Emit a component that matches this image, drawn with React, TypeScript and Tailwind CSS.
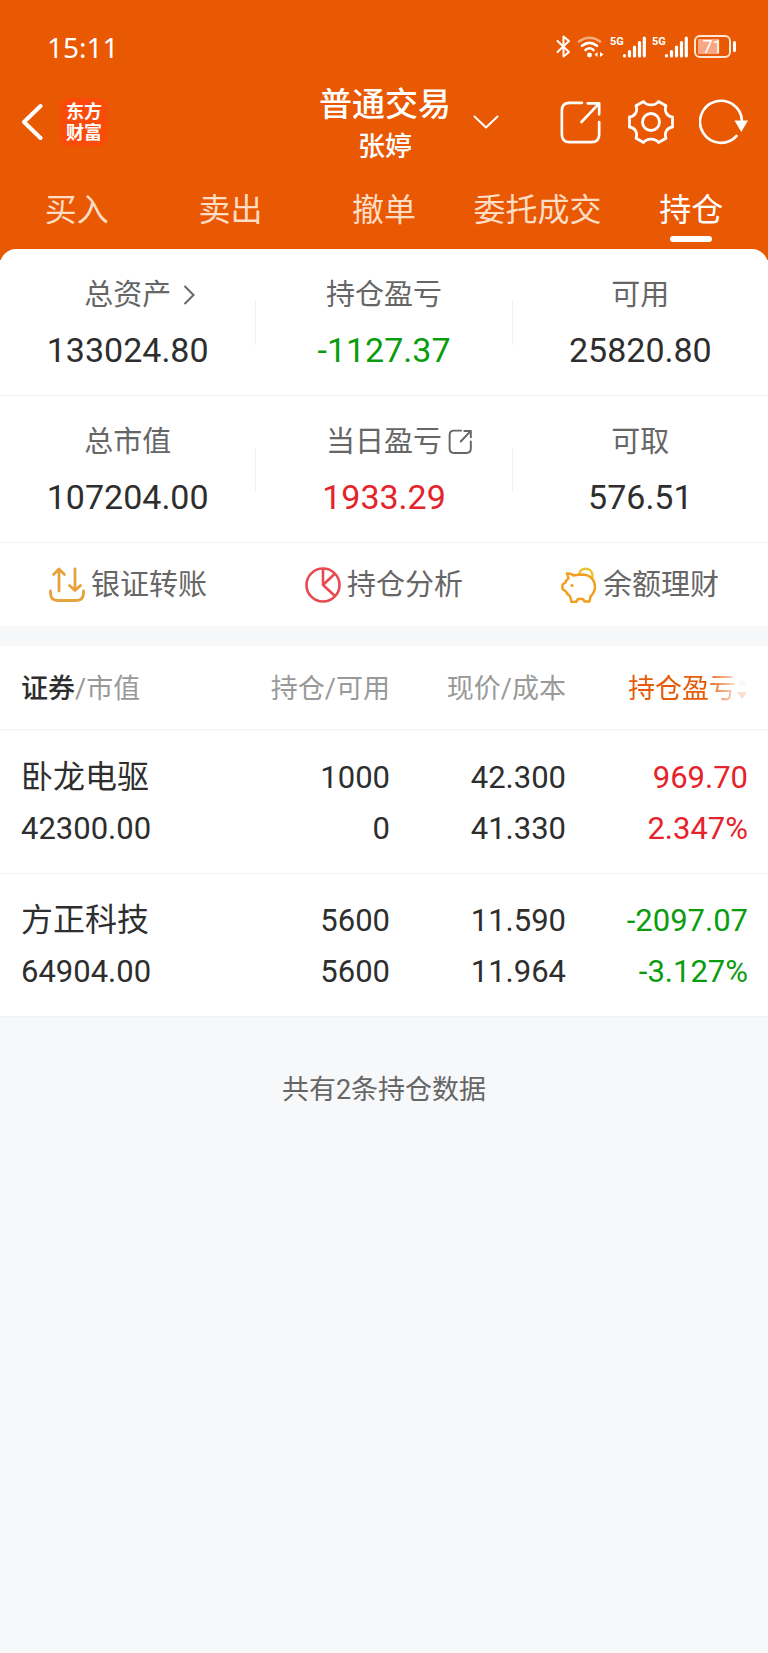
import type { ReactNode } from "react"
import clsx from "clsx"

const tabs = ["买入", "卖出", "撤单", "委托成交", "持仓"]

const holdings = [
  {
    name: "卧龙电驱",
    marketValue: "42300.00",
    shares: "1000",
    available: "0",
    price: "42.300",
    cost: "41.330",
    profit: "969.70",
    rate: "2.347%",
    up: true,
  },
  {
    name: "方正科技",
    marketValue: "64904.00",
    shares: "5600",
    available: "5600",
    price: "11.590",
    cost: "11.964",
    profit: "-2097.07",
    rate: "-3.127%",
    up: false,
  },
]

function BluetoothIcon() {
  return (
    <svg width="15" height="23" viewBox="0 0 15 23" fill="none" stroke="currentColor" strokeWidth="2" strokeLinejoin="round" strokeLinecap="round">
      <path d="M1.5 6 13 17 7.5 21.5V1.5L13 6 1.5 17" />
    </svg>
  )
}

function WifiIcon() {
  return (
    <svg width="27" height="22" viewBox="0 0 27 22" fill="none" stroke="currentColor" strokeWidth="2.6" strokeLinecap="round">
      <path d="M2 5.5Q12.5 -2 23 5.5" opacity="0.5" />
      <path d="M5 9.8Q12.5 4 20 9.8" />
      <path d="M8.5 14Q12.5 10.5 16.5 14" />
      <circle cx="12.5" cy="19" r="2.4" fill="currentColor" stroke="none" />
      <path d="M20.5 16v5l-3-2.500zM23 16v5l3.500-2.500z" fill="currentColor" stroke="none" />
    </svg>
  )
}

function Signal() {
  return (
    <div className="flex items-start">
      <span className="w-3 text-[11px] leading-[11px] font-bold">5G</span>
      <svg width="24" height="22" viewBox="0 0 24 22" fill="none" stroke="currentColor" strokeWidth="3.2" strokeLinecap="round">
        <path d="M2.500 19.500v.5M7.500 15.500V20M12.500 11V20M17.500 6.500V20M22.300 2V20" />
      </svg>
    </div>
  )
}

function Battery() {
  return (
    <div className="flex items-center gap-[2px]">
      <div className="flex h-[23px] w-[37px] rounded-[6px] border-2 border-[#ffe6d5] p-[2px]">
        <div className="flex w-full items-center justify-center bg-linear-to-r from-[#f9a783] from-71% to-transparent to-71% text-[18px] leading-[17px]">
          71
        </div>
      </div>
      <div className="h-[11px] w-[3px] rounded-full bg-white" />
    </div>
  )
}

function ShareIcon({ size, strokeWidth }: { size: number; strokeWidth: number }) {
  return (
    <svg width={size} height={size} viewBox="0 0 44 46" fill="none" stroke="currentColor" strokeWidth={strokeWidth} strokeLinecap="round" strokeLinejoin="round">
      <path d="M23 3H10Q2 3 2 11V36Q2 44 10 44H33Q41 44 41 36V23" />
      <path d="M22.500 23 40 4.500M29 3.500H41V15" />
    </svg>
  )
}

function GearIcon() {
  return (
    <svg width="46" height="44" viewBox="0 0 46 44" fill="none" stroke="currentColor" strokeWidth="2.8" strokeLinejoin="round">
      <path d="M15.500 1.500C19 6 27 6 30.500 1.500L38 5.800C36 11.500 39 16 44.500 17V27C39 28 36 32.500 38 38.200L30.500 42.500C27 38 19 38 15.500 42.500L8 38.200C10 32.500 7 28 1.500 27V17C7 16 10 11.500 8 5.800Z" />
      <circle cx="23" cy="22" r="8.5" />
    </svg>
  )
}

function RefreshIcon() {
  return (
    <svg width="50" height="46" viewBox="0 0 50 46" fill="none" stroke="currentColor" strokeWidth="2.6" strokeLinecap="round">
      <path d="M43 22A21 21 0 1 0 37.500 37" />
      <path d="M35.500 21.500H49L42.300 33Z" fill="currentColor" stroke="none" />
    </svg>
  )
}

function TransferIcon() {
  return (
    <svg width="36" height="36" viewBox="0 0 36 36" fill="none" stroke="#e6a23c" strokeWidth="2.8" strokeLinecap="round" strokeLinejoin="round">
      <path d="M10 24V2.500M4.500 7.500 10 2 15.500 7.500" />
      <path d="M26 2V23M20.500 18.500 26 23.500 31.500 18.500" />
      <path d="M1.500 24V26Q1.500 33.500 9 33.500H27Q34.500 33.500 34.500 26V24" />
    </svg>
  )
}

function PieIcon() {
  return (
    <svg width="36" height="36" viewBox="0 0 36 36" fill="none" stroke="#e84a52" strokeWidth="2.6" strokeLinejoin="round">
      <circle cx="18" cy="18" r="16.5" />
      <path d="M18 1.500V18L29.500 7M18 18 30 29" />
    </svg>
  )
}

function PiggyIcon() {
  return (
    <svg width="36" height="36" viewBox="0 0 36 36" fill="none" strokeWidth="2.5" strokeLinecap="round" strokeLinejoin="round">
      <path d="M18 7.500C19 -.5 31.500 0 31.500 8.500Q31.500 10 31 11" stroke="#ecc02b" />
      <path
        d="M6 6.500Q10 6 12.500 8.500Q17 7.500 22 7.500Q28 8 31 11.500Q34 15 34 20Q34 25 29.500 29.500L28.500 34.500H23.500L22 32H17L15 35H10.500L9 29Q6 27.500 5 24.500L1.500 22V17.500L4.500 15.500Q5 13 7.500 11.500Z"
        stroke="#f0a01e"
      />
      <circle cx="11" cy="18.5" r="1.6" fill="#f0a01e" />
    </svg>
  )
}

function Metric({ label, value, icon, className }: { label: string; value: string; icon?: ReactNode; className?: string }) {
  return (
    <div className="flex-1">
      <div className="grid grid-cols-[1fr_auto_1fr] items-center text-[29px] leading-[54px] text-[#666]">
        <span className="col-start-2">{label}</span>
        {icon}
      </div>
      <div className={clsx("text-center text-[34px] leading-[56px]", className)}>{value}</div>
    </div>
  )
}

function Divider() {
  return <div className="h-11 w-px self-center bg-[#f0f0f0]" />
}

function Action({ icon, label }: { icon: ReactNode; label: string }) {
  return (
    <button type="button" className="flex flex-1 items-center justify-center gap-1.5 text-[29px] text-[#666]">
      {icon}
      <span className="pt-[2px] leading-[81px]">{label}</span>
    </button>
  )
}

export default function App() {
  return (
    <div className="flex min-h-screen flex-col bg-white font-[Roboto,'Noto_Sans_CJK_SC',sans-serif] text-[#2e2e2e]">
      <header className="bg-[#e95802] pb-[11px] text-white">
        <div className="flex h-[80px] items-center justify-between pt-[13px] pr-8 pl-[47px]">
          <span className="font-['Noto_Sans',sans-serif] text-[28px]">15:11</span>
          <div className="flex items-center gap-[6px]">
            <BluetoothIcon />
            <WifiIcon />
            <Signal />
            <Signal />
            <Battery />
          </div>
        </div>

        <div className="grid grid-cols-[1fr_auto_1fr] items-center pr-[19px] pl-[21px]">
          <div className="flex items-center gap-[18px]">
            <button type="button" aria-label="返回">
              <svg width="22" height="38" viewBox="0 0 22 38" fill="none" stroke="currentColor" strokeWidth="4" strokeLinecap="round" strokeLinejoin="round">
                <path d="M19.500 3 3 19 19.500 35" />
              </svg>
            </button>
            <div className="rounded-[8px] bg-[#fb4b0a] px-[5px] py-[3px] text-[18px] leading-[21px] font-bold">
              东方
              <br />
              财富
            </div>
          </div>
          <div className="text-center">
            <h1 className="text-[33px] leading-[50px] font-medium">普通交易</h1>
            <p className="text-[27px] leading-[34px] font-medium">张婷</p>
          </div>
          <div className="flex items-center justify-between pl-[22px]">
            <button type="button" aria-label="切换账户">
              <svg width="26" height="14" viewBox="0 0 26 14" fill="none" stroke="currentColor" strokeWidth="2" strokeLinecap="round" strokeLinejoin="round">
                <path d="M1.500 1.500 13 12.500 24.500 1.500" />
              </svg>
            </button>
            <div className="flex items-center gap-[25px]">
              <button type="button" aria-label="分享">
                <ShareIcon size={44} strokeWidth={2.8} />
              </button>
              <button type="button" aria-label="设置">
                <GearIcon />
              </button>
              <button type="button" aria-label="刷新">
                <RefreshIcon />
              </button>
            </div>
          </div>
        </div>

        <nav className="grid grid-cols-5 pt-[26px]">
          {tabs.map((tab) => {
            const active = tab === "持仓"
            return (
              <button
                key={tab}
                type="button"
                className={clsx("flex flex-col items-center gap-[6px] pb-[7px] text-[32px] leading-[40px]", active ? "text-white" : "text-[#ffdcc4]")}
              >
                {tab}
                <span className={clsx("h-[6px] w-[42px] rounded-full", active && "bg-white")} />
              </button>
            )
          })}
        </nav>
      </header>

      <main className="-mt-[11px] flex flex-1 flex-col rounded-t-2xl bg-white">
        <section className="flex border-b border-[#f2f2f2] pt-[19px] pb-[17px]">
          <Metric
            label="总资产"
            value="133024.80"
            icon={
              <svg className="ml-3" width="12" height="20" viewBox="0 0 12 20" fill="none" stroke="currentColor" strokeWidth="2">
                <path d="M1.500 1 10.500 10 1.500 19" />
              </svg>
            }
          />
          <Divider />
          <Metric label="持仓盈亏" value="-1127.37" className="text-[#0b9c0e]" />
          <Divider />
          <Metric label="可用" value="25820.80" />
        </section>
        <section className="flex border-b border-[#f2f2f2] pt-[19px] pb-[17px]">
          <Metric label="总市值" value="107204.00" />
          <Divider />
          <Metric
            label="当日盈亏"
            value="1933.29"
            className="text-[#e4232b]"
            icon={
              <span className="ml-[6px] flex pb-[2px]">
                <ShareIcon size={25} strokeWidth={3.6} />
              </span>
            }
          />
          <Divider />
          <Metric label="可取" value="576.51" />
        </section>
        <section className="flex">
          <Action icon={<TransferIcon />} label="银证转账" />
          <Action icon={<PieIcon />} label="持仓分析" />
          <Action icon={<PiggyIcon />} label="余额理财" />
        </section>

        <div className="h-5 bg-[#f6f7f9]" />

        <table className="w-full table-fixed text-right">
          <thead className="text-[27px] leading-[80px] text-[#999]">
            <tr className="border-b-2 border-[#f6f6f6]">
              <th className="pt-[3px] pl-[21px] text-left font-normal">
                <span className="font-medium text-[#2e2e2e]">证券</span>/市值
              </th>
              <th className="w-[176px] pt-[3px] font-normal">持仓/可用</th>
              <th className="w-[176px] pt-[3px] font-normal">现价/成本</th>
              <th className="w-[202px] pt-[3px] pr-5 font-normal text-[#e65b0a]">
                <button type="button" className="inline-flex items-center [mask-image:linear-gradient(to_right,black_78px,rgba(0,0,0,0.2)_108px)]">
                  持仓盈亏
                  <svg width="12" height="22" viewBox="0 0 12 22">
                    <path d="M6 1 11 8H1Z" fill="#ddd" />
                    <path d="M6 21 11 14H1Z" fill="currentColor" />
                  </svg>
                </button>
              </th>
            </tr>
          </thead>
          <tbody className="text-[31px] leading-[51px]">
            {holdings.map((item) => (
              <tr key={item.name} className="border-b border-[#f2f2f2]">
                <td className="pt-[21px] pb-[19px] pl-[21px] text-left">
                  <div className="text-[32px]">{item.name}</div>
                  <div>{item.marketValue}</div>
                </td>
                <td className="pt-[21px] pb-[19px]">
                  <div>{item.shares}</div>
                  <div>{item.available}</div>
                </td>
                <td className="pt-[21px] pb-[19px]">
                  <div>{item.price}</div>
                  <div>{item.cost}</div>
                </td>
                <td className={clsx("pt-[21px] pr-5 pb-[19px]", item.up ? "text-[#e4232b]" : "text-[#0b9c0e]")}>
                  <div>{item.profit}</div>
                  <div>{item.rate}</div>
                </td>
              </tr>
            ))}
          </tbody>
        </table>

        <div className="flex-1 bg-[#f7f8fa] pt-[53px] text-center text-[27px] leading-[40px] text-[#666]">
          共有{holdings.length}条持仓数据
        </div>
      </main>
    </div>
  )
}
